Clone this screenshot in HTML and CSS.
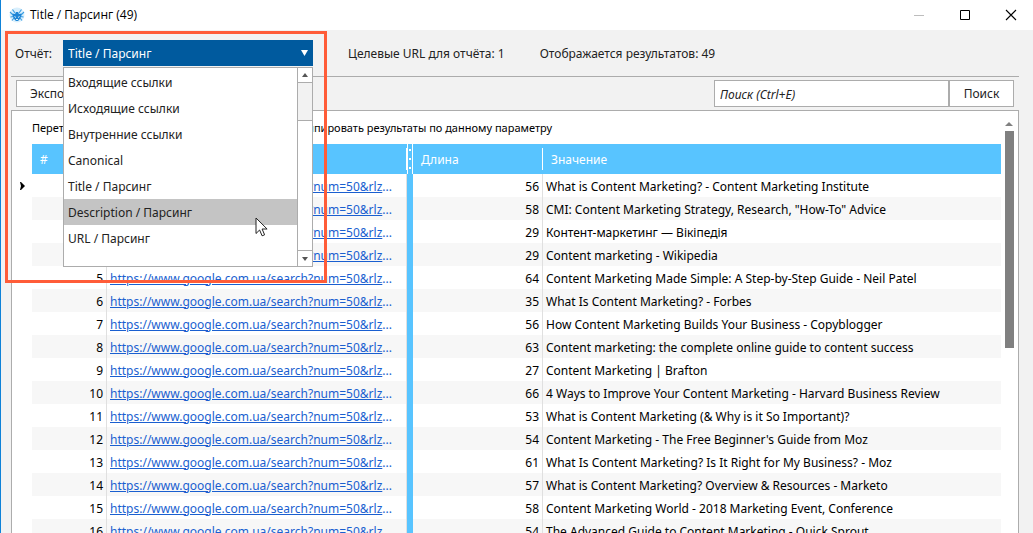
FILE: index.html
```html
<!DOCTYPE html>
<html lang="ru">
<head>
<meta charset="utf-8">
<title>Title / Парсинг (49)</title>
<link rel="stylesheet" href="styles.css">
</head>
<body>
<div class="window">
  <header class="titlebar">
    <svg class="app-icon" viewBox="0 0 16 16" aria-hidden="true">
      <circle cx="8" cy="8" r="7.500" fill="#d9effc"/>
      <path d="M6 6 3.500 2.500M10 6l2.500-3.500M4.500 8.500 1 5M11.500 8.500 15 5M4.500 9.500l-3 .500M11.500 9.500l3 .500M5 11l-2 2.500M11 11l2 2.500" stroke="#3a9de2" stroke-width="1.100" fill="none"/>
      <path d="M3.500 6.500 6 7l1-2h2l1 2 2.500-.500L12 10l-1.500 2.500L9 14H7l-1.500-1.500L4 10z" fill="#1f86d6"/>
      <path d="M5.500 9.500 7 10.500M10.500 9.500 9 10.500M7 12.500h2" stroke="#d9effc" stroke-width="1"/>
    </svg>
    <h1 class="title">Title / Парсинг (49)</h1>
    <div class="controls">
      <button class="control" aria-label="Свернуть"><svg viewBox="0 0 12 12"><path d="M1 6.500h10" stroke="#bdbdbd"/></svg></button>
      <button class="control" aria-label="Развернуть"><svg viewBox="0 0 12 12"><path d="M1.500 1.500h9v9h-9z" fill="none" stroke="#000"/></svg></button>
      <button class="control" aria-label="Закрыть"><svg viewBox="0 0 12 12"><path d="M1 1l10 10M11 1 1 11" stroke="#000" stroke-width="1.100"/></svg></button>
    </div>
  </header>

  <main class="content">
    <div class="report-bar">
      <label class="report-label" for="report">Отчёт:</label>
      <div class="combo">
        <select id="report" class="combo-select"><option>Title / Парсинг</option></select>
        <svg class="combo-arrow" viewBox="0 0 8 6" aria-hidden="true"><path d="M0 0h7L3.500 6z" fill="#fff"/></svg>
        <div class="dropdown">
          <ul class="options" role="listbox" aria-label="Отчёт">
            <li class="option" role="option">Входящие ссылки</li>
            <li class="option" role="option">Исходящие ссылки</li>
            <li class="option" role="option">Внутренние ссылки</li>
            <li class="option" role="option">Canonical</li>
            <li class="option" role="option">Title / Парсинг</li>
            <li class="option option-active" role="option" aria-selected="true">Description / Парсинг</li>
            <li class="option" role="option">URL / Парсинг</li>
          </ul>
          <div class="list-scroll">
            <button class="list-step" aria-label="Вверх"><svg viewBox="0 0 6 4"><path d="M0 4h6L3 0z" fill="#555"/></svg></button>
            <div class="list-thumb"></div>
            <button class="list-step" aria-label="Вниз"><svg viewBox="0 0 6 4"><path d="M0 0h6L3 4z" fill="#555"/></svg></button>
          </div>
          <svg class="cursor" viewBox="0 0 13 20" aria-hidden="true"><path d="M1 1v15.500l3.600-3.500 2.500 5.800 2.500-1-2.500-5.800h5z" fill="#fff" stroke="#222"/></svg>
        </div>
      </div>
      <span class="stat">Целевые URL для отчёта: 1</span>
      <span class="stat">Отображается результатов: 49</span>
    </div>

    <div class="toolbar">
      <button class="button">Экспорт</button>
      <form class="search">
        <input class="search-input" type="text" placeholder="Поиск (Ctrl+E)" aria-label="Поиск">
        <button class="button search-button" type="button">Поиск</button>
      </form>
    </div>

    <section class="panel">
      <div class="gutter"><svg class="row-marker" viewBox="0 0 5 8" aria-hidden="true"><path d="M0 0h1l4 4-4 4H0l1-4z" fill="#000"/></svg></div>
      <div class="grid">
        <p class="group-hint"><span>Перетащите столбец сюда,</span><span>чтобы сгруппировать результаты по данному параметру</span></p>
        <table class="results">
          <colgroup><col class="col-number"><col class="col-url"><col class="col-split"><col class="col-length"><col></colgroup>
          <thead>
            <tr><th>#</th><th></th><th class="split-head"><svg viewBox="0 0 8 30" aria-hidden="true"><path d="M0 4h1v22H0zM1 0h1v30H1zM6 0h1v30H6zM3 5h2v2H3zM3 14h2v2H3zM3 23h2v2H3z" fill="#fff"/></svg></th><th>Длина</th><th class="divided-head"><span class="divided">Значение</span></th></tr>
          </thead>
          <tbody>
            <tr><td>1</td><td><a href="#">https://www.google.com.ua/search?num=50&amp;rlz</a><i>...</i></td><td></td><td>56</td><td>What is Content Marketing? - Content Marketing Institute</td></tr>
            <tr><td>2</td><td><a href="#">https://www.google.com.ua/search?num=50&amp;rlz</a><i>...</i></td><td></td><td>58</td><td>CMI: Content Marketing Strategy, Research, "How-To" Advice</td></tr>
            <tr><td>3</td><td><a href="#">https://www.google.com.ua/search?num=50&amp;rlz</a><i>...</i></td><td></td><td>29</td><td>Контент-маркетинг — Вікіпедія</td></tr>
            <tr><td>4</td><td><a href="#">https://www.google.com.ua/search?num=50&amp;rlz</a><i>...</i></td><td></td><td>29</td><td>Content marketing - Wikipedia</td></tr>
            <tr><td>5</td><td><a href="#">https://www.google.com.ua/search?num=50&amp;rlz</a><i>...</i></td><td></td><td>64</td><td>Content Marketing Made Simple: A Step-by-Step Guide - Neil Patel</td></tr>
            <tr><td>6</td><td><a href="#">https://www.google.com.ua/search?num=50&amp;rlz</a><i>...</i></td><td></td><td>35</td><td>What Is Content Marketing? - Forbes</td></tr>
            <tr><td>7</td><td><a href="#">https://www.google.com.ua/search?num=50&amp;rlz</a><i>...</i></td><td></td><td>56</td><td>How Content Marketing Builds Your Business - Copyblogger</td></tr>
            <tr><td>8</td><td><a href="#">https://www.google.com.ua/search?num=50&amp;rlz</a><i>...</i></td><td></td><td>63</td><td>Content marketing: the complete online guide to content success</td></tr>
            <tr><td>9</td><td><a href="#">https://www.google.com.ua/search?num=50&amp;rlz</a><i>...</i></td><td></td><td>27</td><td>Content Marketing | Brafton</td></tr>
            <tr><td>10</td><td><a href="#">https://www.google.com.ua/search?num=50&amp;rlz</a><i>...</i></td><td></td><td>66</td><td>4 Ways to Improve Your Content Marketing - Harvard Business Review</td></tr>
            <tr><td>11</td><td><a href="#">https://www.google.com.ua/search?num=50&amp;rlz</a><i>...</i></td><td></td><td>53</td><td>What is Content Marketing (&amp; Why is it So Important)?</td></tr>
            <tr><td>12</td><td><a href="#">https://www.google.com.ua/search?num=50&amp;rlz</a><i>...</i></td><td></td><td>54</td><td>Content Marketing - The Free Beginner's Guide from Moz</td></tr>
            <tr><td>13</td><td><a href="#">https://www.google.com.ua/search?num=50&amp;rlz</a><i>...</i></td><td></td><td>61</td><td>What Is Content Marketing? Is It Right for My Business? - Moz</td></tr>
            <tr><td>14</td><td><a href="#">https://www.google.com.ua/search?num=50&amp;rlz</a><i>...</i></td><td></td><td>57</td><td>What is Content Marketing? Overview &amp; Resources - Marketo</td></tr>
            <tr><td>15</td><td><a href="#">https://www.google.com.ua/search?num=50&amp;rlz</a><i>...</i></td><td></td><td>58</td><td>Content Marketing World - 2018 Marketing Event, Conference</td></tr>
            <tr><td>16</td><td><a href="#">https://www.google.com.ua/search?num=50&amp;rlz</a><i>...</i></td><td></td><td>54</td><td>The Advanced Guide to Content Marketing - Quick Sprout</td></tr>
          </tbody>
        </table>
      </div>
      <div class="panel-scroll">
        <svg class="scroll-up" viewBox="0 0 8 4" aria-hidden="true"><path d="M0 4h8L4 0z" fill="#808080"/></svg>
        <div class="scroll-thumb"></div>
      </div>
    </section>
  </main>
  <div class="highlight"></div>
</div>
</body>
</html>
```
FILE: styles.css
```css
* { box-sizing: border-box; }

body {
  margin: 0;
  font: 12px/16px "Noto Sans", "Open Sans", sans-serif;
  color: #222;
}

button, input, select { font: inherit; color: inherit; margin: 0; border-radius: 0; }
svg { display: block; }

.window {
  position: relative;
  display: flex;
  flex-direction: column;
  height: 100vh;
  overflow: hidden;
  border-left: 1px solid #0f82d8;
  background: #f2f2f2;
}

.titlebar {
  display: flex;
  flex: none;
  align-items: center;
  height: 30px;
  padding-left: 8px;
  background: #fff;
}
.app-icon { width: 16px; height: 16px; }
.title { margin: 0 0 0 5px; font: 400 12px/16px "Open Sans", sans-serif; color: #000; }
.controls { display: flex; margin-left: auto; }
.control {
  display: grid;
  place-items: center;
  width: 46px;
  height: 28px;
  padding: 0 0 0 2px;
  border: 0;
  background: none;
}
.control svg { width: 12px; height: 12px; }

.content {
  display: flex;
  flex: 1;
  flex-direction: column;
  min-height: 0;
  padding: 0 14px 0 10px;
}

.report-bar {
  display: flex;
  flex: none;
  align-items: center;
  height: 47px;
  padding-left: 4px;
  border-bottom: 1px solid #acacac;
}
.report-label { width: 48px; }
.combo { position: relative; width: 250px; height: 26px; }
.combo-select {
  display: block;
  width: 100%;
  height: 26px;
  padding: 1px 5px 0;
  appearance: none;
  border: 0;
  background: #005a9e;
  color: #fff;
}
.combo-arrow { position: absolute; top: 10px; right: 4px; width: 8px; height: 6px; }
.report-label, .stat { padding-top: 1px; }
.stat { margin-left: 35px; }

.dropdown {
  position: absolute;
  z-index: 2;
  top: 27px;
  left: 0;
  display: flex;
  width: 100%;
  height: 200px;
  border: 1px solid #acacac;
  background: #fff;
}
.options { flex: 1; margin: 0; padding: 1px 0 0; list-style: none; }
.option { padding: 6px 4px 4px; }
.option-active { background: #c4c4c4; }
.list-scroll {
  display: flex;
  flex-direction: column;
  width: 15px;
  border-left: 1px solid #acacac;
  background: #f2f2f2;
}
.list-step {
  display: grid;
  place-items: center;
  height: 15px;
  padding: 0;
  border: 0;
  border-bottom: 1px solid #acacac;
  background: #fff;
}
.list-step:last-child { border-width: 1px 0 0; }
.list-step svg { width: 6px; height: 4px; }
.list-thumb {
  flex: 1;
  margin-top: 37px;
  border: solid #acacac;
  border-width: 1px 0;
  background: #fff;
}
.cursor { position: absolute; top: 149px; left: 191px; width: 13px; height: 20px; }

.toolbar {
  display: flex;
  flex: none;
  justify-content: space-between;
  height: 33px;
  padding: 3px 5px;
}
.button {
  height: 27px;
  padding: 1px 13px 0;
  border: 1px solid #acacac;
  background: #fff;
}
.search { display: flex; }
.search-input {
  width: 235px;
  height: 27px;
  padding: 1px 5px 0;
  border: 1px solid #acacac;
  background: #fff;
}
.search-input::placeholder { color: #222; font-style: italic; opacity: 1; }
.search-button { width: 65px; }

.panel {
  display: flex;
  flex: 1;
  min-height: 0;
  border: 1px solid #acacac;
  border-bottom: 0;
  background: #fff;
  color: #000;
}
.gutter { flex: none; width: 20px; padding: 71px 0 0 8px; }
.row-marker { width: 5px; height: 8px; }
.grid { flex: 1; min-width: 0; overflow: hidden; }
.group-hint {
  display: flex;
  justify-content: space-between;
  width: 520px;
  height: 33px;
  margin: 0;
  padding-top: 9px;
  font-size: 11px;
}

.results { width: 100%; border-collapse: separate; border-spacing: 0; table-layout: fixed; }
.col-number { width: 75px; }
.col-url { width: 300px; }
.col-split { width: 6px; }
.col-length { width: 130px; }
.results th {
  height: 30px;
  padding: 2px 8px 0;
  background: #58c4ff;
  color: #fff;
  font-weight: 400;
  text-align: left;
}
.results .split-head { padding: 0; }
.split-head svg { width: 8px; height: 30px; margin-left: -1px; }
.results .divided-head { padding: 0; }
.divided { display: block; margin-left: -1px; padding: 4px 0 2px 8px; border-left: 1px solid #fff; }
.results td {
  height: 23px;
  padding: 2px 4px 0 3px;
  overflow: hidden;
  white-space: nowrap;
}
.results tr:nth-child(even) td { background: #f7f7f7; }
.results td:nth-child(1),
.results td:nth-child(2),
.results td:nth-child(4) { border-right: 1px solid #e0e0e0; }
.results td:nth-child(1),
.results td:nth-child(4) { padding-right: 3px; text-align: right; }
.results tbody td:nth-child(3) { background: #58c4ff; padding: 0; }
.results a, .results i { color: #1a5fd0; font-style: normal; }

.panel-scroll { flex: none; width: 17px; padding: 11px 4px 0; }
.scroll-up { width: 8px; height: 4px; margin-bottom: 5px; }
.scroll-thumb { width: 9px; height: 217px; background: #808080; }

.highlight {
  position: absolute;
  z-index: 3;
  top: 31px;
  left: 4px;
  width: 322px;
  height: 252px;
  border: 3px solid #ff5c38;
  pointer-events: none;
}
```
